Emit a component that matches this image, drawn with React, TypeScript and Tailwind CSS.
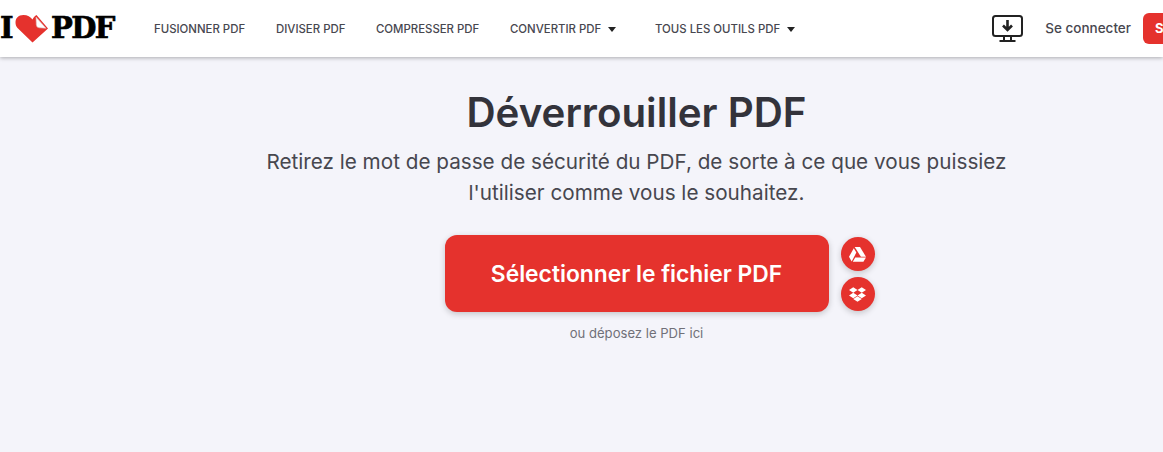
import React from 'react';
import { FaDropbox } from 'react-icons/fa';

const NavItem = ({ label, caret, className }: { label: string; caret?: boolean; className: string }) => (
  <a className={`flex items-center text-[11.4px] font-medium text-[#47474f] whitespace-nowrap ${className}`}>
    {label}
    {caret && <span className="ml-[7px] w-0 h-0 border-x-[4px] border-x-transparent border-t-[5px] border-t-[#222]" />}
  </a>
);

const Heart = () => (
  <svg width="34" height="30" viewBox="0 0 34 30" className="shrink-0">
    <path d="M17.5 28.5 L2.5 14 C-1.5 9 0.5 1 8.5 1 C12.5 1 15.5 3 17.5 5.5 C18.5 3.5 20 1.5 21.5 1 L33 14.5 Z" fill="#e5322d" />
    <path d="M21 3 L31 14.3 L24 13.8 Q21.5 13.5 21.3 11 Z" fill="#fff" stroke="#d9b5b3" strokeWidth="0.6" />
  </svg>
);

const DriveIcon = () => (
  <svg width="17" height="15" viewBox="0 0 17 15" fill="#fff">
    <path d="M5.7 0 H11 L17 9.8 H11.9 Z" />
    <path d="M4.8 1.2 L7.3 5.6 L2.7 14.4 L0 9.8 Z" />
    <path d="M6.2 10.4 H17 L14.4 14.8 H3.8 Z" />
  </svg>
);

export default function App() {
  return (
    <div className="w-[1163px] h-[452px] overflow-hidden bg-[#f4f4fa] font-['Inter','Noto_Sans',sans-serif]">
      <header className="h-[57px] bg-white flex items-center shadow-[0_1px_4px_rgba(0,0,0,0.3)] relative">
        <div className="flex items-center w-[154px] shrink-0 h-full font-['DejaVu_Serif',serif] font-bold text-[29px] leading-none text-black tracking-[-1.6px] [-webkit-text-stroke:0.7px_#000]">
          <span className="w-[15px]">I</span>
          <Heart />
          <span className="ml-[2px]">PDF</span>
        </div>
        <nav className="flex items-center pt-[2px]">
          <NavItem label="FUSIONNER PDF" className="w-[122px]" />
          <NavItem label="DIVISER PDF" className="w-[100px]" />
          <NavItem label="COMPRESSER PDF" className="w-[134px]" />
          <NavItem label="CONVERTIR PDF" caret className="w-[145px]" />
          <NavItem label="TOUS LES OUTILS PDF" caret className="w-[150px]" />
        </nav>
        <div className="flex items-center ml-auto">
          <svg width="31" height="27" viewBox="0 0 31 27" fill="none" stroke="#222" strokeWidth="2" className="mr-[22px]">
            <rect x="1" y="1" width="29" height="20" rx="2.5" />
            <path d="M15.5 5 V15 M11 10.5 L15.5 15 L20 10.5" strokeWidth="2.6" />
            <path d="M12 21 V25.5 M19 21 V25.5 M7.5 26 H23.5" />
          </svg>
          <span className="text-[13.5px] font-medium text-[#47474f] mr-[12px] whitespace-nowrap">Se connecter</span>
          <div className="w-[20px] h-[31px] bg-[#e5322d] rounded-l-[6px] overflow-hidden pl-[12px] text-[13px] leading-[31px] font-bold text-white">S</div>
        </div>
      </header>

      <main className="flex flex-col items-center pl-[100px]">
        <h1 className="mt-[32px] text-[40.3px] leading-[48px] font-semibold text-[#33333b] ml-[10px] whitespace-nowrap">Déverrouiller PDF</h1>
        <p className="mt-[9px] text-[20.7px] leading-[31px] text-[#47474f] text-center ml-[10px] whitespace-nowrap">
          Retirez le mot de passe de sécurité du PDF, de sorte à ce que vous puissiez<br />
          l'utiliser comme vous le souhaitez.
        </p>
        <div className="flex items-start mt-[27px] ml-[56px]">
          <button className="w-[384px] h-[77px] pt-[1px] rounded-[12px] bg-[#e5322d] text-white text-[22.8px] font-semibold shadow-[0_2px_6px_rgba(0,0,0,0.2)]">
            Sélectionner le fichier PDF
          </button>
          <div className="ml-[12px] mt-[2px] flex flex-col gap-[6px]">
            <span className="w-[34px] h-[34px] rounded-full bg-[#e5322d] flex items-center justify-center shadow-[0_2px_6px_rgba(0,0,0,0.2)]"><DriveIcon /></span>
            <span className="w-[34px] h-[34px] rounded-full bg-[#e5322d] flex items-center justify-center text-white text-[17px] shadow-[0_2px_6px_rgba(0,0,0,0.2)]"><FaDropbox /></span>
          </div>
        </div>
        <p className="mt-[12px] text-[13.1px] leading-[18px] text-[#707078] ml-[10px]">ou déposez le PDF ici</p>
      </main>
    </div>
  );
}
